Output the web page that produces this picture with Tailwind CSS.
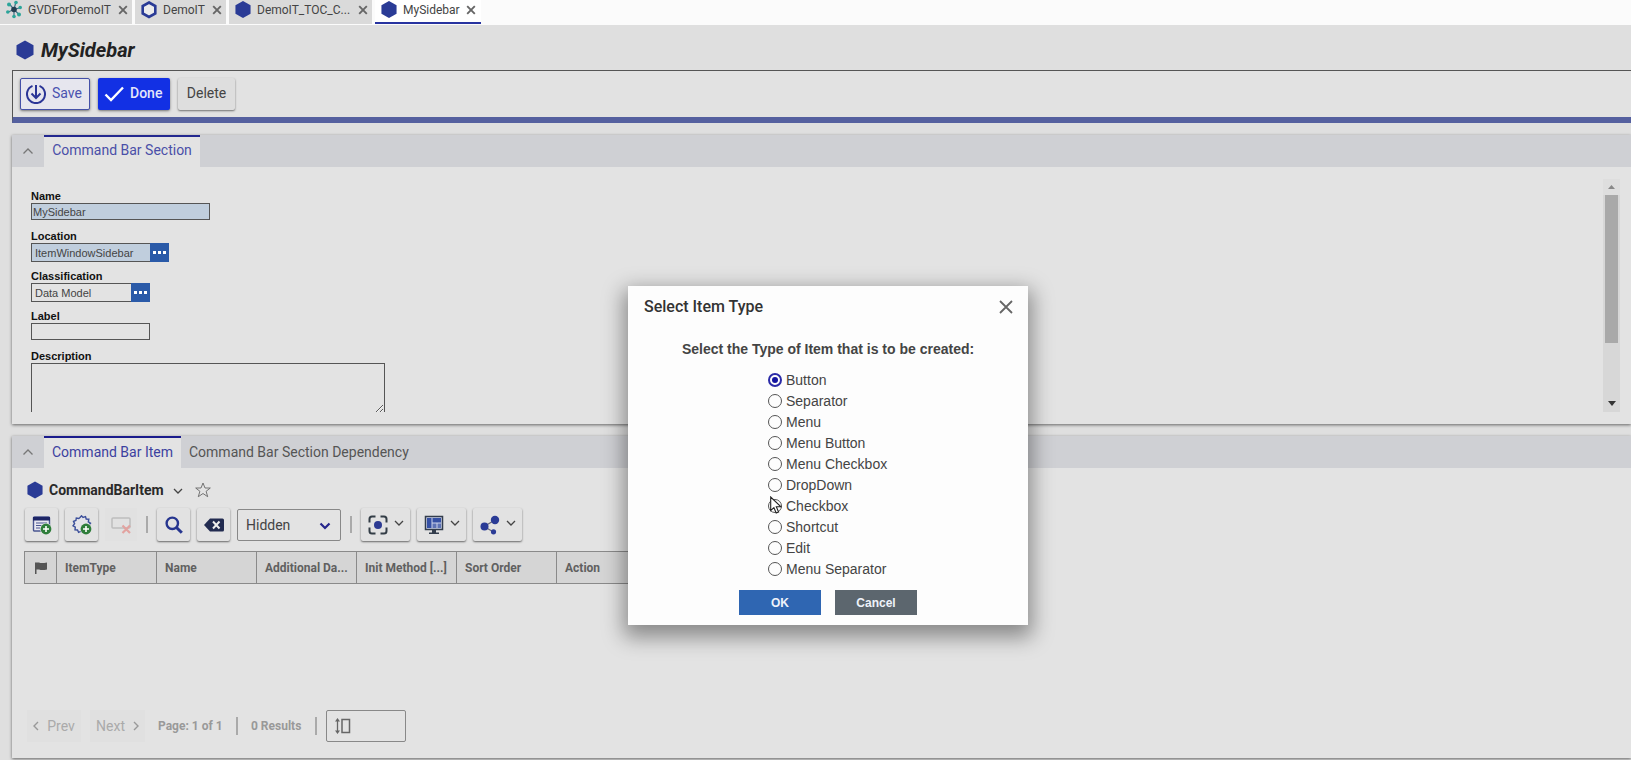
<!DOCTYPE html>
<html lang="en">
<head>
<meta charset="utf-8">
<title>MySidebar</title>
<script src="https://cdn.jsdelivr.net/npm/@tailwindcss/browser@4"></script>
</head>
<body class="bg-[#dfdfdf] font-['Roboto',sans-serif] text-[#444]">
<svg class="hidden" aria-hidden="true">
  <symbol id="hex" viewBox="0 0 18 20"><path d="M9 0.5 17.5 5.2V14.8L9 19.5 0.5 14.8V5.2Z" fill="#2a3b96"/></symbol>
  <symbol id="cross" viewBox="0 0 10 10"><path d="M1.200 1.200 8.800 8.800M8.800 1.200 1.200 8.800" stroke="#666" stroke-width="1.900" fill="none"/></symbol>
  <symbol id="down" viewBox="0 0 10 6"><path d="M1 1 5 5 9 1" stroke="currentColor" stroke-width="1.300" fill="none"/></symbol>
  <symbol id="up" viewBox="0 0 12 8"><path d="M1.500 6.500 6 2 10.500 6.500" stroke="currentColor" stroke-width="1.300" fill="none"/></symbol>
  <symbol id="plus" viewBox="0 0 12 12"><circle cx="6" cy="6" r="6" fill="#e4e4e4"/><circle cx="6" cy="6" r="5.400" fill="#2e7d3a"/><path d="M6 3v6M3 6h6" stroke="#fff" stroke-width="1.600"/></symbol>
</svg>

<div class="flex min-h-screen flex-col overflow-hidden">
  <nav class="flex h-[25px] items-start gap-[3px] bg-[#fbfbfb] text-xs leading-5" aria-label="Open tabs">
    <div class="flex h-6 w-[132px] items-start bg-[#dadada] pl-[6px] pr-1">
      <svg class="h-[19px] w-4 shrink-0" viewBox="0 0 16 18"><g stroke="#3f6f86" stroke-width="1.200"><path d="M8 9 3 3M8 9 10 1M8 9 15 7M8 9 13 14M8 9 8 16M8 9 1 12"/></g><g fill="#2ba59a"><circle cx="3" cy="4" r="2"/><circle cx="10" cy="2" r="1.800"/><circle cx="14.200" cy="7" r="1.800"/><circle cx="13" cy="14" r="2"/><circle cx="8" cy="16" r="1.800"/><circle cx="1.800" cy="11.500" r="1.800"/></g><circle cx="8" cy="9" r="2.800" fill="#253f52"/></svg>
      <span class="ml-[6px] flex-1">GVDForDemoIT</span>
      <button aria-label="Close GVDForDemoIT" class="mt-[5px]"><svg class="size-[10px]"><use href="#cross"/></svg></button>
    </div>
    <div class="flex h-6 w-[91px] items-start bg-[#dadada] pl-[6px] pr-1">
      <svg class="h-[19px] w-4 shrink-0" viewBox="0 0 16 18"><path d="M8 2 14.300 5.500V13L8 16.500 1.700 13V5.500Z" fill="#ececec" stroke="#2a3b96" stroke-width="2.600"/></svg>
      <span class="ml-[6px] flex-1">DemoIT</span>
      <button aria-label="Close DemoIT" class="mt-[5px]"><svg class="size-[10px]"><use href="#cross"/></svg></button>
    </div>
    <div class="flex h-6 w-[143px] items-start bg-[#dadada] pl-[6px] pr-1">
      <svg class="h-[19px] w-4 shrink-0"><use href="#hex"/></svg>
      <span class="ml-[6px] flex-1">DemoIT_TOC_C...</span>
      <button aria-label="Close DemoIT_TOC_C" class="mt-[5px]"><svg class="size-[10px]"><use href="#cross"/></svg></button>
    </div>
    <div class="flex h-6 w-[106px] items-start border-b-2 border-[#2733a0] bg-white pl-[6px] pr-[5px]">
      <svg class="h-[19px] w-4 shrink-0"><use href="#hex"/></svg>
      <span class="ml-[6px] flex-1">MySidebar</span>
      <button aria-label="Close MySidebar" class="mt-[5px]"><svg class="size-[10px]"><use href="#cross"/></svg></button>
    </div>
  </nav>

  <header class="flex h-[45px] items-center gap-[7px] pl-4 pt-[4px]">
    <svg class="h-5 w-[18px]"><use href="#hex"/></svg>
    <h1 class="text-xl font-bold italic text-[#222]">MySidebar</h1>
  </header>

  <div class="ml-3 flex h-[53px] items-start gap-2 border-b-[6px] border-l border-t border-b-[#55609f] border-l-[#555] border-t-[#555] bg-[#e2e2e2] pl-[7px] pt-[7px] text-sm">
    <button class="flex h-8 w-[70px] items-center gap-[6px] rounded-xs border border-[#4450a8] bg-[#e6e6ee] pl-[5px] text-[#4a52b0] shadow-sm shadow-black/40"><svg class="size-5" viewBox="0 0 20 20" fill="none" stroke="#2a3596" stroke-width="2"><path d="M6.500 1.800A9 9 0 1 0 13.500 1.800"/><path d="M10 1V14M5.500 9.500 10 14 14.500 9.500"/></svg><span class="pb-[2px]">Save</span></button>
    <button class="flex h-8 w-[72px] items-center gap-[6px] rounded-xs bg-[#1230e4] pl-[6px] font-medium text-[#e4e6fa] shadow-sm shadow-black/40"><svg class="h-4 w-5" viewBox="0 0 20 16"><path d="M1.500 8.500 7 14 19 1.500" stroke="#fff" stroke-width="2.400" fill="none"/></svg><span class="pb-[2px]">Done</span></button>
    <button class="h-8 w-[57px] rounded-xs bg-[#dedede] pb-[2px] shadow-[0_1px_2px_rgba(0,0,0,0.5)]">Delete</button>
  </div>

  <section class="ml-3 mt-3 h-[289px] bg-[#e3e3e3] shadow-[0_1px_3px_rgba(0,0,0,0.55)]">
    <div class="flex h-8 bg-[#cfd0d4] text-sm">
      <button class="grid w-8 place-items-center text-[#777]" aria-label="Collapse section"><svg class="h-2 w-3"><use href="#up"/></svg></button>
      <button class="w-[156px] whitespace-nowrap border-t-2 border-[#23288f] bg-[#e3e3e3] pb-1 text-[#4a4fa8]">Command Bar Section</button>
    </div>
    <div class="flex pb-3 pl-[19px] pr-[11px] pt-3">
      <form class="h-[233px] flex-1 overflow-hidden pt-[11px] font-['Liberation_Sans',sans-serif] text-[11px] leading-[11px] text-[#444]">
        <label for="name" class="block pb-px font-bold leading-3 text-[#111]">Name</label>
        <input id="name" value="MySidebar" class="block h-[17px] w-[179px] border border-[#555] bg-[#c0cedd] px-px">
        <label for="loc" class="mt-[10px] block pb-px font-bold leading-3 text-[#111]">Location</label>
        <div class="flex h-[19px]"><input id="loc" value="ItemWindowSidebar" class="w-[119px] border border-r-0 border-[#555] bg-[#c0cedd] px-[3px]"><button type="button" aria-label="Choose location" class="grid w-[19px] place-items-center bg-[#2a5aa8]"><svg class="h-[3px] w-[13px]" fill="#fff"><path d="M0 0h3v3H0zM5 0h3v3H5zM10 0h3v3h-3z"/></svg></button></div>
        <label for="cls" class="mt-2 block pb-px font-bold leading-3 text-[#111]">Classification</label>
        <div class="flex h-[19px]"><input id="cls" value="Data Model" class="w-[100px] border border-r-0 border-[#555] bg-[#e3e3e3] px-[3px]"><button type="button" aria-label="Choose classification" class="grid w-[19px] place-items-center bg-[#2a5aa8]"><svg class="h-[3px] w-[13px]" fill="#fff"><path d="M0 0h3v3H0zM5 0h3v3H5zM10 0h3v3h-3z"/></svg></button></div>
        <label for="lbl" class="mt-2 block pb-px font-bold leading-3 text-[#111]">Label</label>
        <input id="lbl" class="block h-[17px] w-[119px] border border-[#555] bg-[#e3e3e3] px-px">
        <label for="desc" class="mt-[10px] block pb-px font-bold leading-3 text-[#111]">Description</label>
        <textarea id="desc" class="block h-[51px] w-[354px] resize border border-[#555] bg-[#e3e3e3] p-px"></textarea>
      </form>
      <div class="flex w-[17px] flex-col items-center bg-[#d7d7d7]" aria-hidden="true">
        <div class="grid h-4 w-full place-items-center bg-[#dedede]"><svg class="h-1 w-[7px]"><path d="M0 4 3.500 0 7 4Z" fill="#888"/></svg></div>
        <div class="h-[148px] w-[13px] bg-[#a9a9a9]"></div>
        <div class="mb-[6px] mt-auto"><svg class="h-[5px] w-2"><path d="M0 0H8L4 5Z" fill="#333"/></svg></div>
      </div>
    </div>
  </section>

  <section class="mb-[2px] ml-3 mt-3 flex flex-1 flex-col bg-[#e3e3e3] shadow-[0_1px_3px_rgba(0,0,0,0.55)]">
    <div class="flex h-8 bg-[#cfd0d4] text-sm">
      <button class="grid w-8 place-items-center text-[#777]" aria-label="Collapse section"><svg class="h-2 w-3"><use href="#up"/></svg></button>
      <button class="w-[137px] whitespace-nowrap border-t-2 border-[#1a1c8c] bg-[#e3e3e3] pb-[2px] text-[#3c419f]">Command Bar Item</button>
      <button class="px-2 text-[#555]">Command Bar Section Dependency</button>
    </div>

    <div class="flex h-10 items-center pl-[15px] pt-[4px]">
      <svg class="h-[18px] w-4"><use href="#hex"/></svg>
      <h2 class="ml-[6px] text-sm font-bold text-[#2a2a2a]">CommandBarItem</h2>
      <button aria-label="Item menu" class="ml-[9px] mt-[2px]"><svg class="h-[6px] w-[10px]"><use href="#down"/></svg></button>
      <button aria-label="Favorite" class="ml-3"><svg class="size-4" viewBox="0 0 16 16"><path d="M8 1 10 6H15.300L11.100 9.300 12.700 14.700 8 11.500 3.300 14.700 4.900 9.300 0.700 6H6Z" fill="none" stroke="#666" stroke-width=".9"/></svg></button>
    </div>

    <div class="flex h-[33px] items-center gap-[7px] pl-[13px]">
      <button aria-label="Create item" class="grid size-[33px] place-items-center rounded-xs bg-[#e2e2e2] shadow-[0_1px_2px_rgba(0,0,0,0.55)]"><svg class="size-5" viewBox="0 0 20 20"><rect x="1.500" y="2" width="16" height="14" rx="1" fill="#e8e8f2" stroke="#4a5590" stroke-width="1.400"/><path d="M1 2h17v3.500H1z" fill="#1d2566"/><path d="M4 8h11M4 10.500h6M4 13h4" stroke="#4a5590" stroke-width="1.200"/><use href="#plus" x="8" y="8" width="12" height="12"/></svg></button>
      <button aria-label="Add related item" class="grid size-[33px] place-items-center rounded-xs bg-[#e2e2e2] shadow-[0_1px_2px_rgba(0,0,0,0.55)]"><svg class="size-5" viewBox="0 0 20 20"><path d="M8 2.500 9.500 .8 11 2.500 13.500 1.600 14.200 4 16.800 4.200 16.300 6.800 18.500 8.200 17 10.200 18 12.500 15.700 13.500 15.300 16 12.800 15.700 11 17.800 9.200 16.200 6.600 17.300 5.500 15 3 14.800 3.300 12.200 1 10.800 2.600 8.700 1.500 6.400 3.900 5.500 4.300 3 6.800 3.500Z" fill="#e4e4ea" stroke="#3b4f9a" stroke-width="1.400"/><use href="#plus" x="8" y="8" width="12" height="12"/></svg></button>
      <button disabled aria-label="Remove item" class="grid h-[33px] w-8 place-items-center bg-[#e1e1e1]"><svg class="size-5" viewBox="0 0 20 20" fill="none"><rect x="1" y="3" width="18" height="10" rx="1" stroke="#bdbdbd" stroke-width="1.500"/><path d="M11.500 10.500 19 18M19 10.500 11.500 18" stroke="#e2a3a0" stroke-width="2.200"/></svg></button>
      <span class="mx-[2px] h-[17px] w-[2px] bg-[#aaa]"></span>
      <button aria-label="Search" class="grid size-[33px] place-items-center rounded-xs bg-[#e2e2e2] shadow-[0_1px_2px_rgba(0,0,0,0.55)]"><svg class="size-[18px]" viewBox="0 0 18 18" fill="none" stroke="#26358f"><circle cx="7.300" cy="7.300" r="5.700" stroke-width="2.400"/><path d="M11.500 11.500 16.800 16.800" stroke-width="3"/></svg></button>
      <button aria-label="Clear search" class="grid size-[33px] place-items-center rounded-xs bg-[#e2e2e2] shadow-[0_1px_2px_rgba(0,0,0,0.55)]"><svg class="h-[14px] w-5" viewBox="0 0 20 14"><path d="M6 .5H18.500Q20 .5 20 2V12Q20 13.500 18.500 13.500H6L0 7Z" fill="#222b50"/><path d="M9 3.500 15.500 10.500M15.500 3.500 9 10.500" stroke="#eee" stroke-width="2"/></svg></button>
      <div class="grid h-8 w-[104px] items-center text-sm">
        <select aria-label="Search mode" class="col-start-1 row-start-1 h-8 w-full appearance-none rounded-xs border border-[#888] bg-[#e3e3e3] pl-2"><option>Hidden</option></select>
        <svg class="pointer-events-none col-start-1 row-start-1 mr-[10px] mt-[2px] h-2 w-3 justify-self-end" viewBox="0 0 12 8"><path d="M1.500 1.500 6 6 10.500 1.500" fill="none" stroke="#26268c" stroke-width="2.200"/></svg>
      </div>
      <span class="mx-[2px] h-[17px] w-[2px] bg-[#aaa]"></span>
      <button aria-label="Focus" class="flex h-[33px] w-[49px] items-center gap-[6px] rounded-xs bg-[#e2e2e2] pl-[7px] shadow-[0_1px_2px_rgba(0,0,0,0.55)]"><svg class="size-5" viewBox="0 0 20 20"><path d="M1.500 7.500V4Q1.500 1.500 4 1.500H7.500M12.500 1.500H16Q18.500 1.500 18.500 4V7.500M18.500 12.500V16Q18.500 18.500 16 18.500H12.500M7.500 18.500H4Q1.500 18.500 1.500 16V12.500" fill="none" stroke="#333d46" stroke-width="2"/><circle cx="10" cy="10" r="4" fill="#2c3a92"/></svg><svg class="mb-[3px] h-[6px] w-[10px]"><use href="#down"/></svg></button>
      <button aria-label="Layout" class="flex h-[33px] w-[49px] items-center gap-[6px] rounded-xs bg-[#e2e2e2] pl-[7px] shadow-[0_1px_2px_rgba(0,0,0,0.55)]"><svg class="size-5" viewBox="0 0 20 20"><rect x="1.500" y="1.500" width="17" height="13" fill="#ccd3ea" stroke="#333d4c" stroke-width="1.500"/><path d="M3 3h4.500v10H3zM8.500 3H17v4.500H8.500z" fill="#3550a5"/><path d="M8.500 8.500h4V13h-4zM13.500 8.500H17V13h-3.500z" fill="#5e73b5"/><path d="M8 15h4v2.500h3V19H5v-1.500h3z" fill="#333d4c"/></svg><svg class="mb-[3px] h-[6px] w-[10px]"><use href="#down"/></svg></button>
      <button aria-label="Share" class="flex h-[33px] w-[49px] items-center gap-[6px] rounded-xs bg-[#e2e2e2] pl-[7px] shadow-[0_1px_2px_rgba(0,0,0,0.55)]"><svg class="size-5" viewBox="0 0 20 20" fill="#2a3b96"><path d="M4 11.500 15 5M4 11.500 13.500 17" stroke="#667" stroke-width="1.200"/><circle cx="4.500" cy="11.500" r="4"/><circle cx="15" cy="5" r="4.200"/><circle cx="13.500" cy="16.800" r="2.600"/></svg><svg class="mb-[3px] h-[6px] w-[10px]"><use href="#down"/></svg></button>
    </div>

    <table class="ml-3 mt-[10px] h-[33px] w-[633px] table-fixed border-collapse bg-[#d5d5d5] text-left text-xs text-[#606060]">
      <thead><tr class="border border-[#8a8a8a]">
        <th class="w-8 border-r border-[#8a8a8a]" aria-label="Flag"><svg class="mx-auto h-3 w-3" viewBox="0 0 12 12"><path d="M0 .5H4Q6 1.500 12 .5V7.500Q7 8.500 4 7.500H1.500V12H0Z" fill="#555"/></svg></th>
        <th class="w-[100px] border-r border-[#8a8a8a] pl-2 font-bold">ItemType</th>
        <th class="w-[100px] border-r border-[#8a8a8a] pl-2 font-bold">Name</th>
        <th class="w-[100px] whitespace-nowrap border-r border-[#8a8a8a] pl-2 font-bold">Additional Da...</th>
        <th class="w-[100px] whitespace-nowrap border-r border-[#8a8a8a] pl-2 font-bold">Init Method [...]</th>
        <th class="w-[100px] border-r border-[#8a8a8a] pl-2 font-bold">Sort Order</th>
        <th class="pl-2 font-bold">Action</th>
      </tr></thead>
    </table>

    <footer class="mb-4 mt-auto flex h-8 items-center pl-[15px] text-xs font-bold text-[#999]">
      <button disabled class="flex h-8 w-[54px] items-center justify-center gap-2 bg-[#e0e0e0] text-sm font-normal text-[#aaa]"><svg class="h-[10px] w-[6px]" viewBox="0 0 6 10"><path d="M5 1 1 5 5 9" stroke="#999" stroke-width="1.400" fill="none"/></svg>Prev</button>
      <button disabled class="ml-[9px] flex h-8 w-[55px] items-center justify-center gap-2 bg-[#e0e0e0] text-sm font-normal text-[#aaa]">Next<svg class="h-[10px] w-[6px]" viewBox="0 0 6 10"><path d="M1 1 5 5 1 9" stroke="#999" stroke-width="1.400" fill="none"/></svg></button>
      <span class="ml-[13px] w-[65px] whitespace-nowrap">Page: 1 of 1</span>
      <span class="ml-[13px] h-[18px] w-[2px] bg-[#aaa]"></span>
      <span class="ml-[13px] w-[51px] whitespace-nowrap">0 Results</span>
      <span class="ml-[13px] h-[18px] w-[2px] bg-[#aaa]"></span>
      <label class="ml-[9px] flex h-8 w-20 items-center rounded-xs border border-[#888] pl-2">
        <svg class="h-4 w-4 shrink-0" viewBox="0 0 16 16"><path d="M2.500 2V14" stroke="#666" stroke-width="1.300"/><path d="M0 3.500 2.500 0 5 3.500ZM0 12.500 2.500 16 5 12.500Z" fill="#666"/><path d="M7 1.500H14.500V14.500H7Z" fill="none" stroke="#666" stroke-width="1.500"/></svg>
        <input aria-label="Page size" class="w-full min-w-0 bg-transparent">
      </label>
    </footer>
  </section>
</div>

<div class="absolute inset-x-0 top-[286px] flex justify-center pl-[25px]">
  <div role="dialog" aria-labelledby="dlg" class="flex w-[400px] flex-col bg-[#fdfdfd] pb-[10px] font-['Liberation_Sans',sans-serif] text-sm text-[#444] shadow-[0_8px_20px_4px_rgba(0,0,0,0.4)]">
    <div class="flex h-[42px] items-center justify-between pl-4 pr-[15px]">
      <h2 id="dlg" class="font-['Roboto',sans-serif] text-base font-medium text-[#333]">Select Item Type</h2>
      <button aria-label="Close dialog"><svg class="size-[14px]" viewBox="0 0 14 14"><path d="M1 1 13 13M13 1 1 13" stroke="#666" stroke-width="1.800"/></svg></button>
    </div>
    <fieldset class="flex flex-col">
      <legend class="w-full pt-[11px] text-center font-bold leading-5">Select the Type of Item that is to be created:</legend>
      <div class="ml-[140px] mt-[10px] grid auto-rows-[21px] items-center justify-start">
        <label class="flex items-center gap-1"><input type="radio" name="t" checked class="mt-px size-[14px] appearance-none rounded-full border-2 border-[#2b2ba8] checked:bg-[#1414a0] checked:bg-clip-content checked:p-[2px]">Button</label>
        <label class="flex items-center gap-1"><input type="radio" name="t" class="mt-px size-[14px] appearance-none rounded-full border border-[#555]">Separator</label>
        <label class="flex items-center gap-1"><input type="radio" name="t" class="mt-px size-[14px] appearance-none rounded-full border border-[#555]">Menu</label>
        <label class="flex items-center gap-1"><input type="radio" name="t" class="mt-px size-[14px] appearance-none rounded-full border border-[#555]">Menu Button</label>
        <label class="flex items-center gap-1"><input type="radio" name="t" class="mt-px size-[14px] appearance-none rounded-full border border-[#555]">Menu Checkbox</label>
        <label class="flex items-center gap-1"><input type="radio" name="t" class="mt-px size-[14px] appearance-none rounded-full border border-[#555]">DropDown</label>
        <label class="relative flex items-center gap-1"><input type="radio" name="t" class="mt-px size-[14px] appearance-none rounded-full border border-[#555]">Checkbox
          <svg class="absolute left-[2px] top-0 h-[18px] w-3" viewBox="0 0 12 18" aria-hidden="true"><path d="M.7 1V14.500L3.900 11.600 6.200 17 8.600 16 6.300 10.800H11Z" fill="#fff" stroke="#222" stroke-width="1.100"/></svg></label>
        <label class="flex items-center gap-1"><input type="radio" name="t" class="mt-px size-[14px] appearance-none rounded-full border border-[#555]">Shortcut</label>
        <label class="flex items-center gap-1"><input type="radio" name="t" class="mt-px size-[14px] appearance-none rounded-full border border-[#555]">Edit</label>
        <label class="flex items-center gap-1"><input type="radio" name="t" class="mt-px size-[14px] appearance-none rounded-full border border-[#555]">Menu Separator</label>
      </div>
    </fieldset>
    <div class="mt-[11px] flex justify-center gap-[14px] text-xs font-bold text-[#eef2fa]">
      <button class="h-[25px] w-[82px] bg-[#2f66b2]">OK</button>
      <button class="h-[25px] w-[82px] bg-[#5c666e]">Cancel</button>
    </div>
  </div>
</div>
</body>
</html>
